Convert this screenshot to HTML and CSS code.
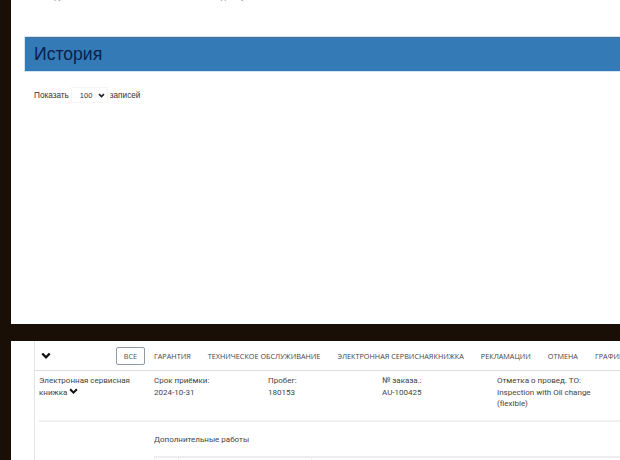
FILE: index.html
```html
<!DOCTYPE html>
<html lang="ru">
<head>
<meta charset="utf-8">
<title>История</title>
<link rel="stylesheet" href="styles.css">
</head>
<body>
<section class="panel panel-top">
  <div class="cut-row">
    <span class="cut-a">Группа</span>
    <span class="cut-b">Модель у</span>
  </div>
  <h1 class="history-title">История</h1>
  <div class="length-row">
    <span>Показать</span>
    <span class="fake-select">
      <span>100</span>
      <svg class="select-arrow" viewBox="0 0 10 7" aria-hidden="true"><path d="M1.5 1.5 5 5l3.5-3.5" fill="none" stroke="#222" stroke-width="2.4"/></svg>
    </span>
    <span>записей</span>
  </div>
</section>
<section class="panel panel-bottom">
  <div class="card">
    <nav class="tabs">
      <svg class="chevron chevron-main" viewBox="0 0 12 9" aria-hidden="true"><path d="M1.5 1.5 6 6l4.5-4.5" fill="none" stroke="#111" stroke-width="2.8"/></svg>
      <div class="tab-list">
        <span class="tab tab-active">ВСЕ</span>
        <span class="tab">ГАРАНТИЯ</span>
        <span class="tab">ТЕХНИЧЕСКОЕ ОБСЛУЖИВАНИЕ</span>
        <span class="tab">ЭЛЕКТРОННАЯ СЕРВИСНАЯКНИЖКА</span>
        <span class="tab">РЕКЛАМАЦИИ</span>
        <span class="tab">ОТМЕНА</span>
        <span class="tab">ГРАФИК</span>
      </div>
    </nav>
    <div class="details">
      <div class="info-grid">
        <div>Электронная сервисная книжка <svg class="chevron chevron-inline" viewBox="0 0 12 9" aria-hidden="true"><path d="M1.5 1.5 6 6l4.5-4.5" fill="none" stroke="#111" stroke-width="2.8"/></svg></div>
        <div>Срок приёмки:<br>2024-10-31</div>
        <div>Пробег:<br>180153</div>
        <div>№ заказа.:<br>AU-100425</div>
        <div class="info-wide">Отметка о провед. ТО:<br>Inspection with Oil change<br>(flexible)</div>
      </div>
      <div class="extra">
        <div class="extra-title">Дополнительные работы</div>
        <div class="extra-table">
          <span class="cell cell-a"></span>
          <span class="cell cell-b"></span>
          <span class="cell cell-c"></span>
        </div>
      </div>
    </div>
  </div>
</section>
</body>
</html>
```
FILE: styles.css
```css
* { box-sizing: border-box; }
html, body { margin: 0; height: 460px; overflow: hidden; }
body {
  padding-left: 11px;
  background: #1a0f06;
  font-family: "Liberation Sans", Arial, sans-serif;
  color: #333;
}
.panel { background: #fff; overflow: hidden; }
.panel-top { height: 324px; }
.panel-bottom { height: 119px; margin-top: 17px; padding-left: 23px; }

.cut-row {
  display: flex;
  height: 2px;
  padding-left: 39px;
  align-items: flex-end;
  font-size: 8px;
  line-height: 10px;
  color: #777;
}
.cut-a { width: 160px; }
.history-title {
  margin: 35px 0 0 14px;
  height: 34px;
  padding: 0 9px;
  background: #337ab7;
  border-top: 1px solid #4a6f90;
  box-shadow: 0 0 0 1px #cfe6f7;
  color: #0a1f4a;
  font-size: 17.6px;
  font-weight: 400;
  line-height: 33px;
}
.length-row {
  display: flex;
  align-items: center;
  gap: 2px;
  margin: 16px 0 0 23px;
  height: 16px;
  font-size: 8.2px;
  color: #333;
}
.fake-select {
  display: flex;
  align-items: center;
  justify-content: space-between;
  width: 37px;
  height: 16px;
  padding: 0 2px 0 8px;
  border: 1px solid #f4f4f4;
  font-size: 7.5px;
}
.select-arrow { width: 7px; height: 5px; }

.card { height: 100%; border-left: 1px solid #e4e4e4; }
.tabs {
  display: flex;
  align-items: center;
  height: 30px;
  padding: 0 0 0 6px;
  border-bottom: 1px solid #ddd;
  overflow: hidden;
}
.chevron-main { width: 10px; height: 8px; flex: none; }
.tab-list {
  display: flex;
  align-items: center;
  gap: 9px;
  margin-left: 65px;
  white-space: nowrap;
}
.tab {
  padding: 0 8px 0 0;
  font-family: "Open Sans", "Noto Sans", sans-serif;
  font-size: 7.25px;
  color: #444;
}
.tab-active {
  display: flex;
  align-items: center;
  justify-content: center;
  width: 29px;
  height: 18px;
  padding: 0;
  border: 1px solid #8b9aa5;
  border-radius: 2px;
  color: #555;
}
.details {
  padding: 4px 0 0 4px;
  font-family: Roboto, "Noto Sans", sans-serif;
  font-size: 8px;
  line-height: 11.6px;
  color: #444;
}
.info-grid {
  display: grid;
  grid-template-columns: 115px 114px 114px 115px 130px;
  height: 47px;
  border-bottom: 2px solid #f0f0f0;
  white-space: nowrap;
}
.info-grid > div:first-child { width: 100px; white-space: normal; }
.chevron-inline { display: inline-block; width: 9px; height: 7px; }
.extra { padding: 12px 0 0 115px; }
.extra-title { height: 22px; }
.extra-table {
  display: flex;
  height: 12px;
  border-top: 2px solid #eee;
}
.cell { display: block; height: 100%; border-left: 1px solid #eee; }
.cell-a { width: 24px; }
.cell-b { width: 133px; }
.cell-c { flex: 1; }
```
